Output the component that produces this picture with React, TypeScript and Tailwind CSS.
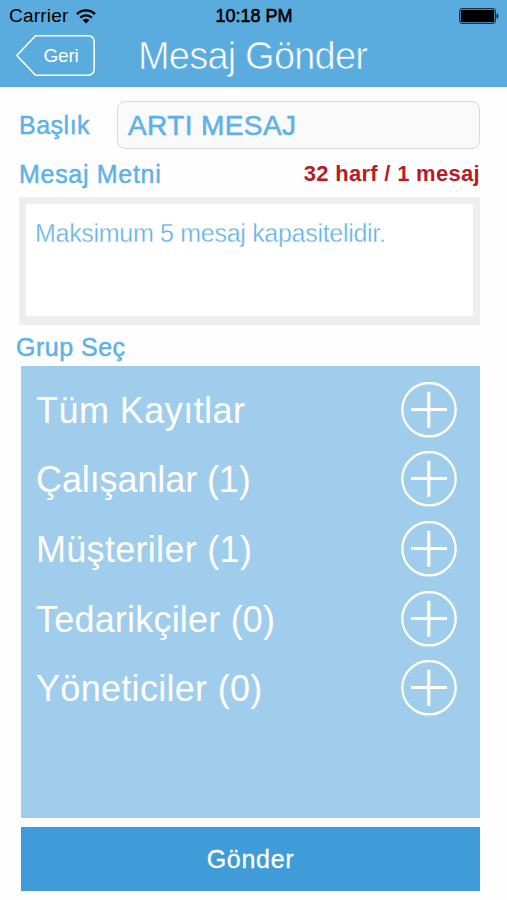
const groups = [
  { name: "Tüm Kayıtlar", tracking: "tracking-[0.45px]" },
  { name: "Çalışanlar (1)", tracking: "tracking-[-0.1px]" },
  { name: "Müşteriler (1)", tracking: "tracking-[0.3px]" },
  { name: "Tedarikçiler (0)", tracking: "tracking-[0.2px]" },
  { name: "Yöneticiler (0)", tracking: "tracking-[0.3px]" },
];

function WifiIcon() {
  return (
    <svg className="w-5 h-[15px]" viewBox="0 0 20 15" fill="none" stroke="#000" strokeWidth="2.3">
      <path d="M1 5.1C6 0.1 14 0.1 19 5.1" />
      <path d="M4.3 8.7C7.5 5.6 12.5 5.6 15.7 8.7" />
      <path d="M6.7 11.1C8.6 9.3 11.4 9.3 13.3 11.1L10 14.4Z" fill="#000" stroke="none" />
    </svg>
  );
}

function BatteryIcon() {
  return (
    <svg className="w-10 h-4" viewBox="0 0 40 16">
      <rect x="0.5" y="0.5" width="36" height="15" rx="2.5" fill="none" stroke="#1b3342" />
      <rect x="1.7" y="1.7" width="33.6" height="12.6" rx="1.2" fill="#000" />
      <path d="M37.6 5.5C39.9 6 39.9 10 37.6 10.5Z" fill="#000" />
    </svg>
  );
}

function PlusCircle() {
  return (
    <svg className="w-14 h-14" viewBox="0 0 56 56" fill="none" stroke="#fff">
      <circle cx="28" cy="27.7" r="26.7" strokeWidth="2.3" />
      <path d="M10 27.5H46M27.8 9.7V45.7" strokeWidth="3.2" />
    </svg>
  );
}

export default function App() {
  return (
    <div className="w-[507px] h-[900px] flex flex-col overflow-hidden bg-[#fefefe] font-['Liberation_Sans',sans-serif] text-[#60b2e6] whitespace-nowrap">
      {/* Header */}
      <header className="h-[87px] shrink-0 bg-[#5aabde]">
        <div className="h-8 grid grid-cols-3 items-center pl-[9px] pr-[8px] text-black">
          <div className="flex items-center gap-2">
            <span className="pt-px text-[19px] tracking-[0.2px]">Carrier</span>
            <WifiIcon />
          </div>
          <span className="pt-px text-center text-[18px] [-webkit-text-stroke:0.6px_#000]">10:18 PM</span>
          <div className="flex justify-end">
            <BatteryIcon />
          </div>
        </div>
        <div className="flex pl-4 pt-[3px]">
          <button className="grid w-[79px] h-[41px]">
            <svg className="col-start-1 row-start-1" width="79" height="41" viewBox="0 0 79 41" fill="none" stroke="#fff" strokeWidth="1.5">
              <path d="M19.5 0.8H71.5Q78.2 0.8 78.2 7.5V33.5Q78.2 40.2 71.5 40.2H19.5L0.9 20.5Z" />
            </svg>
            <span className="col-start-1 row-start-1 pl-[11px] pt-[2px] self-center text-[19px] tracking-[-0.2px] text-white">
              Geri
            </span>
          </button>
          <h1 className="ml-[43px] text-[38px] leading-[43px] tracking-[-0.8px] text-white [-webkit-text-stroke:0.7px_#5aabde]">
            Mesaj Gönder
          </h1>
        </div>
      </header>

      {/* Subject */}
      <div className="flex items-center mt-[14px] pl-[19px] h-12">
        <label className="w-[98px] pt-[2px] text-[25px] tracking-[0.5px] [-webkit-text-stroke:0.5px_#60b2e6]">Başlık</label>
        <div className="w-[363px] h-12 rounded-lg border border-[#d8d9db] bg-[#fafafa] pl-[10px] text-[28px] leading-[47px] tracking-[0.4px] [-webkit-text-stroke:0.6px_#60b2e6]">
          ARTI MESAJ
        </div>
      </div>

      {/* Message */}
      <div className="flex justify-between items-center pl-[19px] pr-[27px] h-12">
        <label className="pt-[3px] text-[25px] tracking-[0.7px] [-webkit-text-stroke:0.5px_#60b2e6]">Mesaj Metni</label>
        <span className="pt-px text-[22px] tracking-[0.3px] font-bold text-[#b51c28]">32 harf / 1 mesaj</span>
      </div>
      <div className="ml-[19px] w-[461px] h-[128px] shrink-0 border-[7px] border-b-[9px] border-[#eeeef1] bg-white pl-[9px] pt-[13px] text-[25px] leading-8 tracking-[-0.3px] [-webkit-text-stroke:0.35px_#fff]">
        Maksimum 5 mesaj kapasitelidir.
      </div>

      {/* Groups */}
      <h2 className="h-[41px] pl-4 text-[25px] leading-[45px] tracking-[0.5px] [-webkit-text-stroke:0.5px_#60b2e6]">Grup Seç</h2>
      <ul className="ml-[21px] w-[459px] h-[452px] shrink-0 bg-[#a0cdeb] pt-[9px] pl-[15px] pr-[23px] text-white">
        {groups.map(({ name, tracking }) => (
          <li key={name} className="h-[69.6px] flex items-center justify-between text-[36px]">
            <span className={`pt-[2px] ${tracking}`}>{name}</span>
            <PlusCircle />
          </li>
        ))}
      </ul>

      <button className="ml-[21px] mt-[9px] w-[459px] h-[64px] shrink-0 bg-[#409cd9] pt-px text-[25px] tracking-[0.7px] text-white [-webkit-text-stroke:0.3px_#fff]">
        Gönder
      </button>
    </div>
  );
}
